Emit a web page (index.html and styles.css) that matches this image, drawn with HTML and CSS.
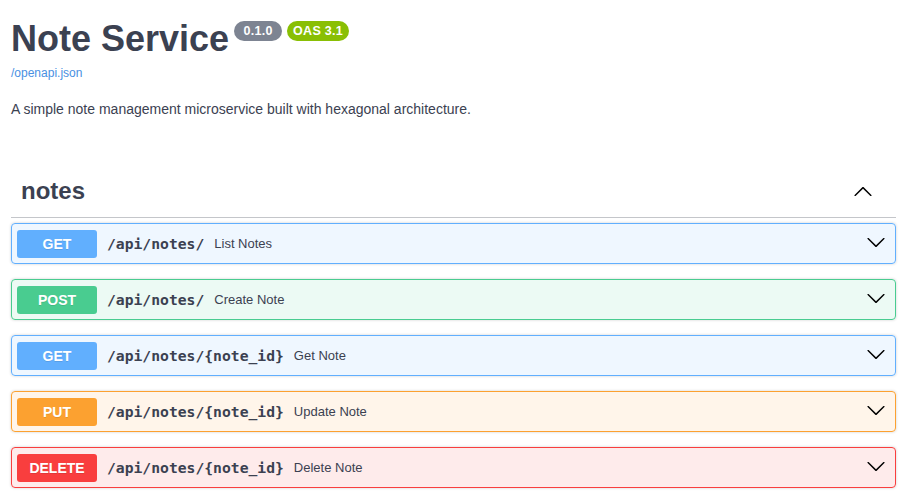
FILE: index.html
```html
<!DOCTYPE html>
<html lang="en">
<head>
<meta charset="utf-8">
<title>Note Service</title>
<link rel="stylesheet" href="styles.css">
</head>
<body>
<div class="wrapper">
  <section class="info">
    <h1 class="title">Note Service<span class="stamp stamp-version">0.1.0</span><span class="stamp stamp-oas">OAS 3.1</span></h1>
    <a class="link" href="#">/openapi.json</a>
    <p class="description">A simple note management microservice built with hexagonal architecture.</p>
  </section>

  <section class="tag">
    <div class="tag-header">
      <h3 class="tag-name">notes</h3>
      <svg class="arrow" width="20" height="20" viewBox="0 0 20 20"><path d="M17.418 14.891c.272.268.709.268.979 0s.271-.701 0-.969l-7.908-7.83c-.27-.268-.707-.268-.979 0l-7.908 7.83c-.27.268-.27.701 0 .969.271.268.709.268.979 0L10 7.75l7.418 7.141z"/></svg>
    </div>

    <div class="opblock get">
      <span class="method">GET</span>
      <span class="path">/api/notes/</span>
      <span class="summary">List Notes</span>
      <svg class="arrow" width="20" height="20" viewBox="0 0 20 20"><path d="M17.418 6.109c.272-.268.709-.268.979 0s.271.701 0 .969l-7.908 7.83c-.27.268-.707.268-.979 0l-7.908-7.83c-.27-.268-.27-.701 0-.969.271-.268.709-.268.979 0L10 13.25l7.418-7.141z"/></svg>
    </div>
    <div class="opblock post">
      <span class="method">POST</span>
      <span class="path">/api/notes/</span>
      <span class="summary">Create Note</span>
      <svg class="arrow" width="20" height="20" viewBox="0 0 20 20"><path d="M17.418 6.109c.272-.268.709-.268.979 0s.271.701 0 .969l-7.908 7.83c-.27.268-.707.268-.979 0l-7.908-7.83c-.27-.268-.27-.701 0-.969.271-.268.709-.268.979 0L10 13.25l7.418-7.141z"/></svg>
    </div>
    <div class="opblock get">
      <span class="method">GET</span>
      <span class="path">/api/notes/{note_id}</span>
      <span class="summary">Get Note</span>
      <svg class="arrow" width="20" height="20" viewBox="0 0 20 20"><path d="M17.418 6.109c.272-.268.709-.268.979 0s.271.701 0 .969l-7.908 7.83c-.27.268-.707.268-.979 0l-7.908-7.83c-.27-.268-.27-.701 0-.969.271-.268.709-.268.979 0L10 13.25l7.418-7.141z"/></svg>
    </div>
    <div class="opblock put">
      <span class="method">PUT</span>
      <span class="path">/api/notes/{note_id}</span>
      <span class="summary">Update Note</span>
      <svg class="arrow" width="20" height="20" viewBox="0 0 20 20"><path d="M17.418 6.109c.272-.268.709-.268.979 0s.271.701 0 .969l-7.908 7.83c-.27.268-.707.268-.979 0l-7.908-7.83c-.27-.268-.27-.701 0-.969.271-.268.709-.268.979 0L10 13.25l7.418-7.141z"/></svg>
    </div>
    <div class="opblock delete">
      <span class="method">DELETE</span>
      <span class="path">/api/notes/{note_id}</span>
      <span class="summary">Delete Note</span>
      <svg class="arrow" width="20" height="20" viewBox="0 0 20 20"><path d="M17.418 6.109c.272-.268.709-.268.979 0s.271.701 0 .969l-7.908 7.83c-.27.268-.707.268-.979 0l-7.908-7.83c-.27-.268-.27-.701 0-.969.271-.268.709-.268.979 0L10 13.25l7.418-7.141z"/></svg>
    </div>
  </section>
</div>
</body>
</html>
```
FILE: styles.css
```css
* { box-sizing: border-box; }
body {
  margin: 0;
  background: #fff;
  font-family: "Liberation Sans", Arial, sans-serif;
  color: #3b4151;
}
.wrapper {
  padding: 18px 20px 0 11px;
}
.info { margin: 0 0 44px; }
.title {
  margin: 0;
  font-size: 36px;
  line-height: 42px;
  font-weight: 700;
  color: #3b4151;
}
.stamp {
  display: inline-block;
  position: relative;
  top: -10px;
  vertical-align: middle;
  font-size: 12.5px;
  line-height: 20px;
  font-weight: 700;
  color: #fff;
  text-align: center;
  border-radius: 57px;
  margin-left: 5px;
  letter-spacing: 0.3px;
}
.stamp-version { background: #7d8492; width: 48px; }
.stamp-oas { background: #89bf04; width: 62px; }
.link {
  display: block;
  margin-top: 5px;
  font-size: 12px;
  line-height: 16px;
  color: #4990e2;
  text-decoration: none;
}
.description {
  margin: 18px 0 0;
  font-size: 14px;
  line-height: 20px;
}
.tag-header {
  display: flex;
  align-items: center;
  justify-content: space-between;
  padding: 11px 23px 9px 10px;
  border-bottom: 1px solid rgba(59,65,81,.3);
  margin-bottom: 5px;
}
.tag-name {
  margin: 0;
  font-size: 24px;
  line-height: 34px;
  font-weight: 700;
}
.arrow { fill: #000; flex: none; }
.opblock {
  display: flex;
  align-items: center;
  padding: 5px;
  border: 1px solid;
  border-radius: 4px;
  box-shadow: 0 0 3px rgba(0,0,0,.19);
  margin-bottom: 15px;
  height: 41px;
}
.method {
  min-width: 80px;
  padding: 6px 0;
  border-radius: 3px;
  text-align: center;
  color: #fff;
  font-size: 14px;
  line-height: 16px;
  font-weight: 700;
  text-shadow: 0 1px 0 rgba(0,0,0,.1);
}
.path {
  padding: 0 10px;
  font-family: "DejaVu Sans Mono", monospace;
  font-weight: 700;
  font-size: 14.7px;
  color: #3b4151;
}
.summary {
  flex: 1;
  font-size: 13px;
  color: #3b4151;
}
.opblock .arrow { margin-right: 4px; position: relative; top: -2px; }
.get { background: rgba(97,175,254,.1); border-color: #61affe; }
.get .method { background: #61affe; }
.post { background: rgba(73,204,144,.1); border-color: #49cc90; }
.post .method { background: #49cc90; }
.put { background: rgba(252,161,48,.1); border-color: #fca130; }
.put .method { background: #fca130; }
.delete { background: rgba(249,62,62,.1); border-color: #f93e3e; }
.delete .method { background: #f93e3e; }
```
